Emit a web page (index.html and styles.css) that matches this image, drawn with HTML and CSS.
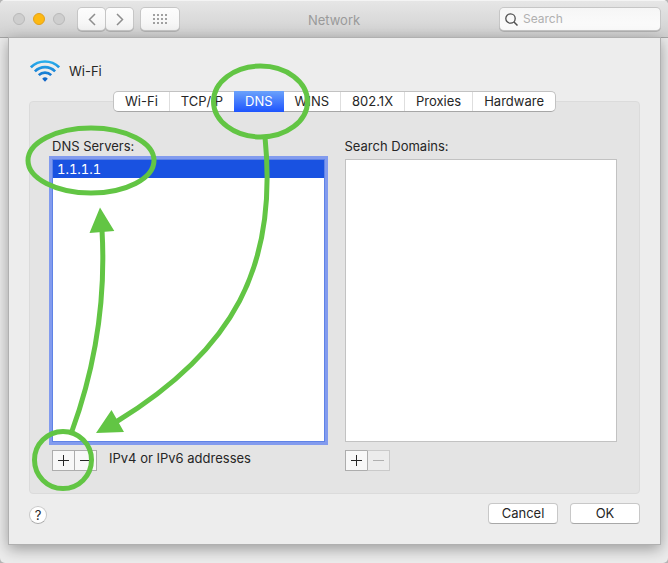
FILE: index.html
```html
<!DOCTYPE html>
<html lang="en">
<head>
<meta charset="utf-8">
<meta name="viewport" content="width=device-width, initial-scale=1">
<title>Network</title>
<link rel="stylesheet" href="styles.css">
</head>
<body>
<div class="window">
  <header class="toolbar">
    <div class="toolbar-left">
      <div class="lights">
        <button class="light" type="button" aria-label="Close"></button>
        <button class="light minimize" type="button" aria-label="Minimize"></button>
        <button class="light" type="button" aria-label="Zoom"></button>
      </div>
      <div class="nav">
        <button class="tool" type="button" aria-label="Back"><svg width="8" height="13" viewBox="0 0 8 13"><path d="M7 1 1.500 6.500 7 12" fill="none" stroke="#8e8e8e" stroke-width="1.500"/></svg></button>
        <button class="tool" type="button" aria-label="Forward"><svg width="8" height="13" viewBox="0 0 8 13"><path d="M1 1 6.500 6.500 1 12" fill="none" stroke="#8e8e8e" stroke-width="1.500"/></svg></button>
      </div>
      <button class="tool wide" type="button" aria-label="Show all"><svg width="14" height="10" viewBox="0 0 14 10"><path d="M0 1h14M0 5h14M0 9h14" fill="none" stroke="#a0a0a0" stroke-width="2" stroke-dasharray="2 2"/></svg></button>
    </div>
    <h1 class="title">Network</h1>
    <div class="toolbar-right">
      <label class="search">
        <svg width="13" height="13" viewBox="0 0 13 13"><circle cx="5.500" cy="5.500" r="4.700" fill="none" stroke="#4f4f4f" stroke-width="1.300"/><path d="m9 9 3.500 3.500" stroke="#4f4f4f" stroke-width="1.500"/></svg>
        <input type="search" placeholder="Search" aria-label="Search">
      </label>
    </div>
  </header>

  <main class="sheet">
    <div class="service">
      <svg width="30" height="22" viewBox="0 0 30 22">
        <defs><linearGradient id="wave" gradientUnits="userSpaceOnUse" x1="0" y1="0" x2="0" y2="22"><stop offset="0" stop-color="#2bb3ee"/><stop offset="1" stop-color="#0a5cc4"/></linearGradient></defs>
        <g fill="none" stroke="url(#wave)" stroke-width="2.600">
          <path d="M.9 7.300a20 20 0 0 1 28.200 0"/>
          <path d="M4.900 11.300a14.300 14.300 0 0 1 20.200 0"/>
          <path d="M8.800 15.200a8.800 8.800 0 0 1 12.400 0"/>
        </g>
        <path d="M12.200 18.700a4 4 0 0 1 5.600 0L15 21.700z" fill="url(#wave)"/>
      </svg>
      <span>Wi-Fi</span>
    </div>

    <div class="tabs" role="tablist">
      <button class="tab" role="tab" type="button">Wi-Fi</button>
      <button class="tab" role="tab" type="button">TCP/IP</button>
      <button class="tab selected" role="tab" type="button" aria-selected="true">DNS</button>
      <button class="tab" role="tab" type="button">WINS</button>
      <button class="tab" role="tab" type="button">802.1X</button>
      <button class="tab" role="tab" type="button">Proxies</button>
      <button class="tab" role="tab" type="button">Hardware</button>
    </div>

    <section class="panel" role="tabpanel">
      <div class="column">
        <h2 class="label" id="servers">DNS Servers:</h2>
        <ul class="list focused" aria-labelledby="servers"><li class="row">1.1.1.1</li></ul>
        <div class="actions">
          <div class="stepper">
            <button class="step" type="button" aria-label="Add server"><svg width="11" height="11" viewBox="0 0 11 11"><path d="M0 5.500h11M5.500 0v11" stroke="currentColor"/></svg></button>
            <button class="step" type="button" aria-label="Remove server"><svg width="11" height="11" viewBox="0 0 11 11"><path d="M0 5.500h11" stroke="currentColor"/></svg></button>
          </div>
          <span>IPv4 or IPv6 addresses</span>
        </div>
      </div>
      <div class="column">
        <h2 class="label" id="domains">Search Domains:</h2>
        <ul class="list" aria-labelledby="domains"></ul>
        <div class="actions">
          <div class="stepper">
            <button class="step" type="button" aria-label="Add domain"><svg width="11" height="11" viewBox="0 0 11 11"><path d="M0 5.500h11M5.500 0v11" stroke="currentColor"/></svg></button>
            <button class="step" type="button" aria-label="Remove domain" disabled><svg width="11" height="11" viewBox="0 0 11 11"><path d="M0 5.500h11" stroke="currentColor"/></svg></button>
          </div>
        </div>
      </div>
    </section>

    <footer class="footer">
      <button class="help" type="button" aria-label="Help">?</button>
      <div class="choices">
        <button class="push" type="button">Cancel</button>
        <button class="push" type="button">OK</button>
      </div>
    </footer>
  </main>

  <svg class="marks" viewBox="0 0 668 563" aria-hidden="true">
    <g fill="none" stroke="#62c544" stroke-width="5">
      <ellipse cx="260.500" cy="101.500" rx="47" ry="35.500"/>
      <ellipse cx="91" cy="160.500" rx="63" ry="32.500"/>
      <circle cx="63" cy="460" r="28.500"/>
      <path d="M72 431C96 365 106 300 102 230"/>
      <path d="M265 137C278 266 234 350 116 422"/>
    </g>
    <path d="m100 207.500 14.300 23.500-24.800 2zM96 433l15.500-23 12.500 22z" fill="#62c544"/>
  </svg>
</div>
</body>
</html>
```

FILE: styles.css
```css
* { box-sizing: border-box; }

body {
  margin: 0;
  background: #b4b4b4;
  color: #262626;
  font: 13px/16px Inter, "Liberation Sans", sans-serif;
}

button, input { font: inherit; color: inherit; }
button { padding: 0; border: 0; }
svg { display: block; flex: none; }

.window {
  position: relative;
  display: flex;
  flex-direction: column;
  min-height: 100vh;
  border-radius: 5px;
  background: #ececec;
  overflow: hidden;
}

.toolbar {
  display: grid;
  grid-template-columns: 1fr auto 1fr;
  align-items: center;
  height: 38px;
  padding: 0 8px;
  border-top: 1px solid #f4f4f4;
  border-bottom: 1px solid #a4a4a4;
  background: linear-gradient(#e6e6e6, #d0d0d0);
}

.toolbar-left { display: flex; align-items: center; gap: 8px; }
.lights { display: flex; gap: 8px; margin: 0 5px; }
.light {
  width: 12px;
  height: 12px;
  border: 1px solid #b9b9b9;
  border-radius: 50%;
  background: #cecece;
}
.minimize { border-color: #e2a01b; background: #fdb912; }
.nav { display: flex; gap: 1px; }

.tool {
  display: flex;
  align-items: center;
  justify-content: center;
  width: 27px;
  height: 22px;
  border-radius: 4px;
  background: linear-gradient(#fdfdfd, #f3f3f3);
  box-shadow: 0 0 0 1px #c6c6c6, 0 1px 0 1px #b2b2b2;
}
.wide { width: 38px; }
.title { margin: 0; padding-top: 1px; color: #9a9a9a; font-size: 13px; font-weight: 400; }
.toolbar-right { display: flex; justify-content: flex-end; }

.search {
  display: flex;
  align-items: center;
  gap: 5px;
  width: 160px;
  height: 22px;
  padding: 0 5px;
  border-radius: 4px;
  background: linear-gradient(#f6f6f6, #fcfcfc);
  box-shadow: 0 0 0 1px #c6c6c6, 0 1px 0 1px #b2b2b2;
}
.search input {
  min-width: 0;
  flex: 1;
  padding: 0;
  border: 0;
  outline: 0;
  background: none;
  font-size: 12px;
}
.search input::placeholder { color: #b0b0b0; }

.sheet {
  flex: 1;
  display: flex;
  flex-direction: column;
  margin: 0 8px 19px 9px;
  padding: 21px 20px 20px;
  background: #ededed;
  box-shadow: 0 0 0 1px #b0b0b0, 0 4px 14px 1px rgba(0, 0, 0, 0.35);
}

.service {
  display: flex;
  align-items: center;
  gap: 9px;
  height: 23px;
  padding-left: 1px;
}

.tabs {
  z-index: 1;
  display: flex;
  align-self: center;
  height: 21px;
  margin-top: 9px;
  border: 1px solid #c2c2c2;
  border-bottom-color: #a6a6a6;
  border-radius: 5px;
  background: #fff;
}
.tab { padding: 0 11px 1px; background: none; border-left: 1px solid #dedede; }
.tab:first-child { border-left: 0; }
.tab.selected {
  margin: -1px 0;
  border: 0;
  background: linear-gradient(#6ba2fb, #1d54fe);
  color: #fff;
}
.selected + .tab { border-left: 0; }

.panel {
  flex: 1;
  display: grid;
  grid-template-columns: 1fr 1fr;
  gap: 20px;
  margin-top: -11px;
  padding: 36px 22px 22px;
  border: 1px solid #dbdbdb;
  border-radius: 4px;
  background: #e4e4e4;
}
.column { display: flex; flex-direction: column; }
.label { margin: 0 0 5px; font-size: 13px; font-weight: 400; }
.list {
  flex: 1;
  margin: 0;
  padding: 1px 0;
  border: 1px solid #c2c2c2;
  background: #fff;
  list-style: none;
}
.focused {
  padding: 0;
  border-color: #5f83e6;
  box-shadow: 0 0 0 3px #829bee;
}
.row {
  padding: 1px 4px;
  background: #1952e1;
  color: #fff;
  font-variant-numeric: tabular-nums;
}
.actions { display: flex; gap: 12px; margin-top: 8px; }
.stepper { display: flex; }
.step {
  display: flex;
  align-items: center;
  justify-content: center;
  width: 23px;
  height: 21px;
  border: 1px solid #adadad;
  background: #f8f8f8;
}
.step + .step { margin-left: -1px; }
.step:disabled { border-color: #cacaca; border-left-color: #adadad; background: #ececec; color: #b0b0b0; }

.footer {
  display: flex;
  justify-content: space-between;
  align-items: center;
  margin-top: 8px;
}
.help, .push {
  border: 1px solid #c8c8c8;
  border-bottom-color: #a8a8a8;
  background: #fff;
}
.help { width: 18px; height: 18px; margin-top: 4px; border-radius: 50%; }
.choices { display: flex; gap: 12px; }
.push { width: 70px; height: 21px; border-radius: 4px; }

.marks {
  position: absolute;
  z-index: 2;
  top: 0;
  left: 0;
  width: 100%;
  pointer-events: none;
}
```
